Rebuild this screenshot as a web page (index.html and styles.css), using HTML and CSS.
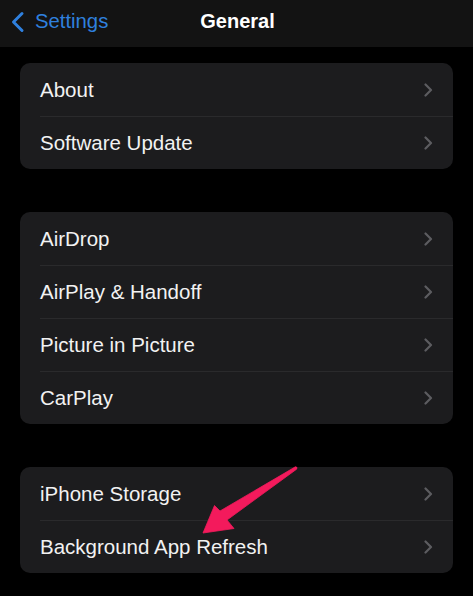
FILE: index.html
```html
<!DOCTYPE html>
<html>
<head>
<meta charset="utf-8">
<link rel="stylesheet" href="styles.css">
</head>
<body>
<div class="screen">
  <header class="nav">
    <div class="back">
      <svg class="back-chev" width="15" height="22" viewBox="0 0 15 22"><path d="M12 2.5 L3.5 11 L12 19.5" fill="none" stroke="#2f80de" stroke-width="3" stroke-linecap="round" stroke-linejoin="round"/></svg>
      <span>Settings</span>
    </div>
    <div class="title">General</div>
  </header>
  <main class="content">
    <section class="group">
      <div class="row"><span>About</span><svg class="chev" width="9" height="14" viewBox="0 0 9 14"><path d="M1.5 1.5 L7 7 L1.5 12.5" fill="none" stroke="#5c5c60" stroke-width="2.2" stroke-linecap="round" stroke-linejoin="round"/></svg></div>
      <div class="row"><span>Software Update</span><svg class="chev" width="9" height="14" viewBox="0 0 9 14"><path d="M1.5 1.5 L7 7 L1.5 12.5" fill="none" stroke="#5c5c60" stroke-width="2.2" stroke-linecap="round" stroke-linejoin="round"/></svg></div>
    </section>
    <section class="group">
      <div class="row"><span>AirDrop</span><svg class="chev" width="9" height="14" viewBox="0 0 9 14"><path d="M1.5 1.5 L7 7 L1.5 12.5" fill="none" stroke="#5c5c60" stroke-width="2.2" stroke-linecap="round" stroke-linejoin="round"/></svg></div>
      <div class="row"><span>AirPlay &amp; Handoff</span><svg class="chev" width="9" height="14" viewBox="0 0 9 14"><path d="M1.5 1.5 L7 7 L1.5 12.5" fill="none" stroke="#5c5c60" stroke-width="2.2" stroke-linecap="round" stroke-linejoin="round"/></svg></div>
      <div class="row"><span>Picture in Picture</span><svg class="chev" width="9" height="14" viewBox="0 0 9 14"><path d="M1.5 1.5 L7 7 L1.5 12.5" fill="none" stroke="#5c5c60" stroke-width="2.2" stroke-linecap="round" stroke-linejoin="round"/></svg></div>
      <div class="row"><span>CarPlay</span><svg class="chev" width="9" height="14" viewBox="0 0 9 14"><path d="M1.5 1.5 L7 7 L1.5 12.5" fill="none" stroke="#5c5c60" stroke-width="2.2" stroke-linecap="round" stroke-linejoin="round"/></svg></div>
    </section>
    <section class="group">
      <div class="row"><span>iPhone Storage</span><svg class="chev" width="9" height="14" viewBox="0 0 9 14"><path d="M1.5 1.5 L7 7 L1.5 12.5" fill="none" stroke="#5c5c60" stroke-width="2.2" stroke-linecap="round" stroke-linejoin="round"/></svg></div>
      <div class="row"><span>Background App Refresh</span><svg class="chev" width="9" height="14" viewBox="0 0 9 14"><path d="M1.5 1.5 L7 7 L1.5 12.5" fill="none" stroke="#5c5c60" stroke-width="2.2" stroke-linecap="round" stroke-linejoin="round"/></svg></div>
    </section>
  </main>
  <svg class="arrow" width="473" height="596" viewBox="0 0 473 596"><path d="M295.4 466.8 L220 511 L214.5 505.5 L203 533 L234 528.5 L227 520 L296.6 469.2 Q298 467 295.4 466.8 Z" fill="#f31a5c" stroke="#f31a5c" stroke-width="0.8" stroke-linejoin="round"/></svg>
</div>
</body>
</html>
```
FILE: styles.css
```css
html, body {
  margin: 0;
  padding: 0;
  background: #000;
}
.screen {
  position: relative;
  width: 473px;
  height: 596px;
  overflow: hidden;
  background: #000;
  font-family: "Liberation Sans", Arial, sans-serif;
}
.nav {
  position: relative;
  height: 47px;
  background: #131313;
  display: flex;
  align-items: center;
}
.back {
  display: flex;
  align-items: center;
  gap: 10px;
  padding-left: 10px;
  color: #2f80de;
  font-size: 20.3px;
  margin-top: -4px;
}
.title {
  position: absolute;
  left: 2px;
  right: 0;
  top: 10px;
  text-align: center;
  color: #fff;
  font-weight: bold;
  font-size: 20px;
  pointer-events: none;
}
.content {
  padding: 16px 20px 0;
  display: flex;
  flex-direction: column;
  gap: 43px;
}
.group {
  background: #1c1c1e;
  border-radius: 10px;
  padding-left: 20px;
}
.row {
  height: 53px;
  display: flex;
  align-items: center;
  justify-content: space-between;
  padding-right: 20px;
  color: #f2f2f2;
  font-size: 20.5px;
  border-top: 1px solid #2a2a2c;
  box-sizing: border-box;
}
.row:first-child {
  border-top: none;
}
.chev {
  display: block;
}
.arrow {
  position: absolute;
  left: 0;
  top: 0;
  pointer-events: none;
}
```
